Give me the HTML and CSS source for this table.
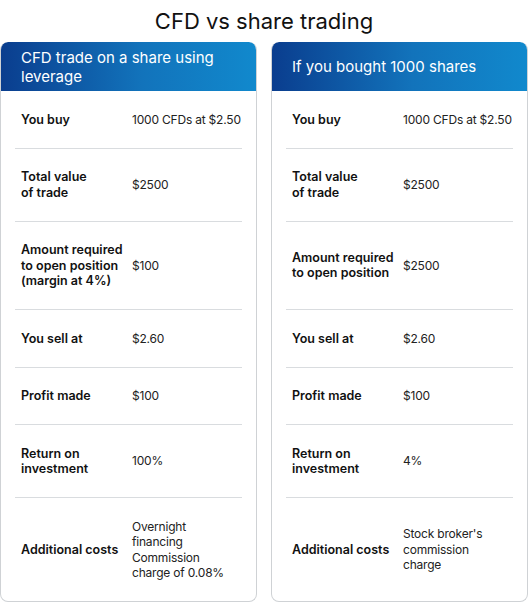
FILE: index.html
```html
<!DOCTYPE html>
<html lang="en">
<head>
  <meta charset="UTF-8">
  <meta name="viewport" content="width=device-width, initial-scale=1.0">
  <title>CFD vs share trading</title>
  <link rel="stylesheet" href="styles.css">
</head>
<body>
  <h1 class="title">CFD vs share trading</h1>
  <main class="compare">
    <section class="card">
      <h2 class="card-head">CFD trade on a share using leverage</h2>
      <div class="row"><div class="label">You buy</div><div class="value">1000 CFDs at $2.50</div></div>
      <div class="row"><div class="label">Total value<br>of trade</div><div class="value">$2500</div></div>
      <div class="row"><div class="label">Amount required<br>to open position<br>(margin at 4%)</div><div class="value">$100</div></div>
      <div class="row"><div class="label">You sell at</div><div class="value">$2.60</div></div>
      <div class="row"><div class="label">Profit made</div><div class="value">$100</div></div>
      <div class="row"><div class="label">Return on<br>investment</div><div class="value">100%</div></div>
      <div class="row"><div class="label">Additional costs</div><div class="value">Overnight<br>financing<br>Commission<br>charge of 0.08%</div></div>
    </section>
    <section class="card">
      <h2 class="card-head">If you bought 1000 shares</h2>
      <div class="row"><div class="label">You buy</div><div class="value">1000 CFDs at $2.50</div></div>
      <div class="row"><div class="label">Total value<br>of trade</div><div class="value">$2500</div></div>
      <div class="row"><div class="label">Amount required<br>to open position</div><div class="value">$2500</div></div>
      <div class="row"><div class="label">You sell at</div><div class="value">$2.60</div></div>
      <div class="row"><div class="label">Profit made</div><div class="value">$100</div></div>
      <div class="row"><div class="label">Return on<br>investment</div><div class="value">4%</div></div>
      <div class="row"><div class="label">Additional costs</div><div class="value">Stock broker's<br>commission<br>charge</div></div>
    </section>
  </main>
</body>
</html>
```

FILE: styles.css
```css
body {
  margin: 0;
  font-family: Inter, 'Open Sans', sans-serif;
  color: #1a1a1a;
  background: #fff;
}
.title {
  margin: 0;
  padding: 6px 0;
  font-size: 22px;
  font-weight: 400;
  line-height: 30px;
  text-align: center;
  color: #111;
}
.compare {
  display: grid;
  grid-template-columns: 1fr 1fr;
  grid-template-rows: repeat(8, auto);
  column-gap: 14px;
}
.card {
  grid-row: span 8;
  display: grid;
  grid-template-rows: subgrid;
  border: 1px solid #cfd2d5;
  border-top: none;
  border-radius: 8px;
  overflow: hidden;
}
.card-head {
  margin: 0 -1px;
  padding: 5.5px 21px;
  display: flex;
  align-items: center;
  font-size: 15px;
  font-weight: 400;
  line-height: 19px;
  color: #fff;
  background: linear-gradient(90deg, #0a3d8e 0%, #1273bb 55%, #1189cd 100%);
  border-radius: 8px 8px 0 0;
}
.row {
  display: flex;
  align-items: center;
  margin: 0 14px;
  padding: 20.5px 0 20.5px 6px;
  border-bottom: 1px solid #d9dcdf;
  font-size: 12.5px;
  line-height: 15.5px;
}
.row:last-child { border-bottom: none; }
.label {
  flex: 0 0 111px;
  font-weight: 600;
  color: #111;
}
.value {
  white-space: nowrap;
  font-size: 12px;
  letter-spacing: -0.2px;
  color: #222;
}
```
